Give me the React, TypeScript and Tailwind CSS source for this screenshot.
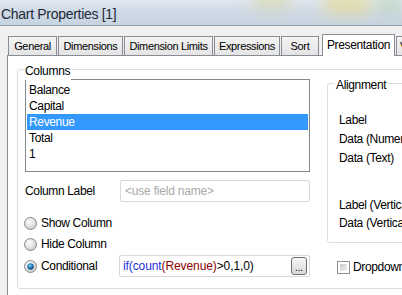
import React from 'react';

const tabs = [
  { label: 'General', w: 'w-[49px]' },
  { label: 'Dimensions', w: 'w-[65px]' },
  { label: 'Dimension Limits', w: 'w-[89px]' },
  { label: 'Expressions', w: 'w-[66px]' },
  { label: 'Sort', w: 'w-[38px]' },
];

const items = ['Balance', 'Capital', 'Revenue', 'Total', '1'];

function Radio({ checked }: { checked?: boolean }) {
  return (
    <svg width="13" height="13" viewBox="0 0 13 13" className="shrink-0">
      <defs>
        <radialGradient id={checked ? 'rc' : 'ru'} cx="0.4" cy="0.35" r="0.7">
          <stop offset="0" stopColor="#ffffff" />
          <stop offset="1" stopColor="#c9c9c9" />
        </radialGradient>
        <radialGradient id="dot" cx="0.4" cy="0.35" r="0.7">
          <stop offset="0" stopColor="#7fd3f5" />
          <stop offset="0.6" stopColor="#1d6fa8" />
          <stop offset="1" stopColor="#0c3c68" />
        </radialGradient>
      </defs>
      <circle cx="6.5" cy="6.5" r="6" fill={checked ? 'url(#rc)' : 'url(#ru)'} stroke="#8a8a8a" />
      {checked && <circle cx="6.5" cy="6.5" r="3.2" fill="url(#dot)" />}
    </svg>
  );
}

export default function App() {
  return (
    <div
      className="relative w-[402px] h-[295px] overflow-hidden bg-[#f0f0f0] text-[11px] text-black"
      style={{ fontFamily: '"Liberation Sans", Arial, sans-serif' }}
    >
      {/* title bar */}
      <div className="relative h-[26px] border-b border-[#8e9aa8] bg-gradient-to-b from-[#dfe7ef] via-[#cfdae6] to-[#c6d3e0] overflow-hidden">
        <div className="absolute right-[30px] top-[-6px] w-[50px] h-[20px] rounded-full bg-[#e6d98a] blur-[8px] opacity-70" />
        <div className="absolute right-[110px] top-[-8px] w-[40px] h-[18px] rounded-full bg-[#d8d39a] blur-[8px] opacity-60" />
        <div className="absolute right-[0px] top-[-6px] w-[24px] h-[18px] rounded-full bg-[#a8cfa0] blur-[8px] opacity-60" />
        <span className="absolute left-[1px] top-[4px] text-[14px] tracking-[-0.3px] text-[#1e2a36]">
          Chart Properties [1]
        </span>
      </div>

      {/* tab strip */}
      <div className="flex items-end pl-[8px] mt-[7px] h-[22px] gap-[1px]">
        {tabs.map(t => (
          <div
            key={t.label}
            className={`${t.w} shrink-0 h-[19px] flex items-center justify-center border border-b-0 border-[#898c95] bg-gradient-to-b from-[#f4f4f4] to-[#e4e4e4] tracking-[-0.35px] whitespace-nowrap`}
          >
            {t.label}
          </div>
        ))}
        <div className="relative z-10 shrink-0 ml-[2px] w-[73px] h-[22px] -mb-[1px] flex items-center justify-center border border-b-0 border-[#898c95] bg-white text-[12px] tracking-[-0.35px] pb-[2px]">
          Presentation
        </div>
        <div className="shrink-0 w-[40px] h-[19px] flex items-center pl-[3px] border border-b-0 border-[#898c95] bg-gradient-to-b from-[#f4f4f4] to-[#e4e4e4]">
          View
        </div>
      </div>

      {/* page */}
      <div className="ml-[7px] w-[420px] h-[260px] bg-white border-l border-t border-[#898c95] pl-[9px] pt-[13px]">
        {/* Columns group */}
        <div className="relative w-[420px] h-[220px] border border-[#d5dfe5] rounded-[3px] flex pl-[7px]">
          <span className="absolute left-[6px] top-[-8px] px-[1px] bg-white text-[12px] tracking-[-0.3px]">Columns</span>

          {/* left column */}
          <div className="w-[285px] shrink-0 flex flex-col">
            <div className="mt-[9px] h-[93px] border border-[#828790] pt-[2px] pl-[1px] pr-[1px]">
              {items.map(it => (
                <div
                  key={it}
                  className={`h-[16px] flex items-center pl-[2px] text-[12px] tracking-[-0.35px] ${
                    it === 'Revenue' ? 'bg-[#3399ff] text-white' : ''
                  }`}
                >
                  {it}
                </div>
              ))}
            </div>

            <div className="mt-[8px] h-[22px] flex items-center">
              <span className="w-[95px] text-[12px] tracking-[-0.35px]">Column Label</span>
              <div className="flex-1 h-[22px] border border-[#d9d9d9] rounded-[2px] flex items-center pl-[4px] text-[12px] text-[#a9a9a9] tracking-[-0.2px]">
                &lt;use field name&gt;
              </div>
            </div>

            <div className="mt-[11px] h-[20px] flex items-center gap-[4px] -ml-[1px] text-[12px] tracking-[-0.35px]">
              <Radio />
              <span>Show Column</span>
            </div>
            <div className="mt-[1px] h-[20px] flex items-center gap-[4px] -ml-[1px] text-[12px] tracking-[-0.35px]">
              <Radio />
              <span>Hide Column</span>
            </div>
            <div className="mt-[1px] h-[22px] flex items-center">
              <div className="w-[95px] flex items-center gap-[4px] -ml-[1px] text-[12px] tracking-[-0.35px]">
                <Radio checked />
                <span>Conditional</span>
              </div>
              <div className="flex-1 h-[22px] border border-[#d9d9d9] rounded-[2px] flex items-center pl-[3px] pr-[2px] text-[12px] tracking-[-0.1px]">
                <span className="text-[#1f2fdb]">if(count</span>
                <span className="text-[#8b0000]">(Revenue)</span>
                <span>&gt;0,1,0)</span>
                <div className="ml-auto w-[16px] h-[18px] border border-[#707070] rounded-[3px] bg-gradient-to-b from-[#f6f6f6] to-[#d8d8d8] flex items-end justify-center text-[10px] leading-[12px]">
                  ...
                </div>
              </div>
            </div>
          </div>

          {/* right column */}
          <div className="ml-[17px] flex-1 flex flex-col">
            <div className="relative mt-[13px] h-[160px] border border-[#d5dfe5] rounded-[3px] pl-[11px] pt-[26px] text-[12px] tracking-[-0.35px] whitespace-nowrap">
              <span className="absolute left-[7px] top-[-8px] px-[1px] bg-white">Alignment</span>
              <div className="h-[19px] flex items-center">Label</div>
              <div className="h-[19px] flex items-center">Data (Numeric)</div>
              <div className="h-[19px] flex items-center">Data (Text)</div>
              <div className="h-[29px]" />
              <div className="h-[18px] flex items-center">Label (Vertical)</div>
              <div className="h-[18px] flex items-center">Data (Vertical)</div>
            </div>
            <div className="mt-[15px] h-[18px] flex items-center gap-[3px] pl-[10px] text-[12px] tracking-[-0.35px]">
              <div className="w-[13px] h-[13px] border border-[#8e8f8f] bg-white p-[2px]">
                <div className="w-full h-full bg-gradient-to-br from-[#cbcbcb] to-[#f2f2f2]" />
              </div>
              <span>Dropdown</span>
            </div>
          </div>
        </div>
      </div>
    </div>
  );
}
